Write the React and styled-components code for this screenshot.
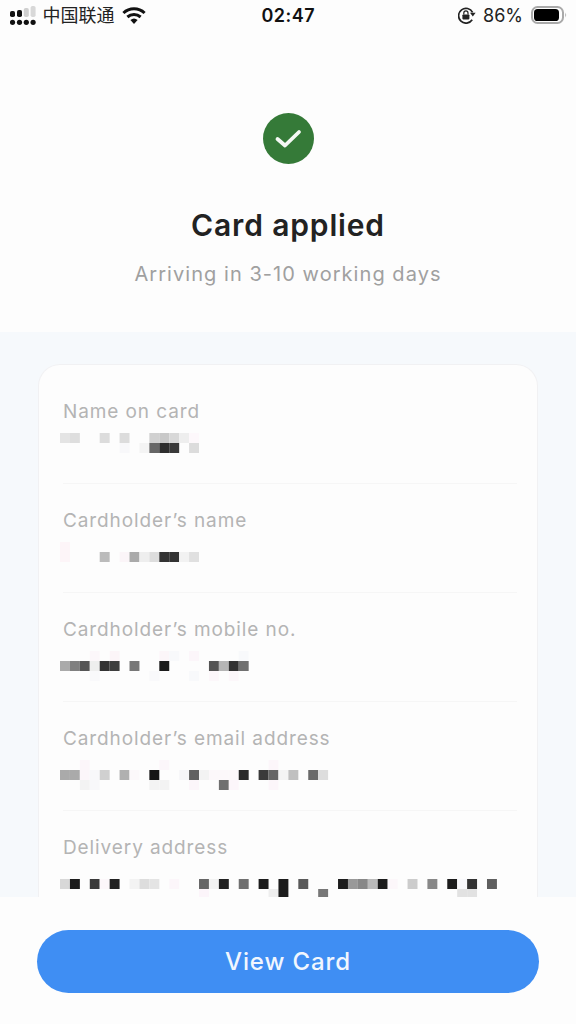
import React from 'react'
import styled, { createGlobalStyle } from 'styled-components'

const GlobalStyle = createGlobalStyle`
  html, body {
    margin: 0;
    padding: 0;
    background: #fdfdfd;
  }
  * { box-sizing: border-box; }
`

const Page = styled.div`
  width: 576px;
  height: 1024px;
  display: flex;
  flex-direction: column;
  overflow: hidden;
  background: #fdfdfd;
  font-family: Inter, "Noto Sans CJK SC", sans-serif;
`

const StatusBar = styled.div`
  height: 32px;
  flex: none;
  display: grid;
  grid-template-columns: 1fr auto 1fr;
  align-items: center;
  padding: 0 9px 2px 9.5px;
  color: #111;
`

const StatusLeft = styled.div`
  display: flex;
  align-items: center;
`

const StatusRight = styled.div`
  display: flex;
  align-items: center;
  justify-content: flex-end;
`

const Carrier = styled.span`
  margin: -2px 7px 0 7px;
  font-size: 18px;
  font-family: "Noto Sans CJK SC", sans-serif;
  color: #222;
`

const Time = styled.span`
  font-size: 18px;
  font-weight: 600;
  letter-spacing: 0.5px;
`

const Percent = styled.span`
  margin: 0 8px 0 7px;
  font-size: 18px;
  color: #222;
`

const Hero = styled.header`
  height: 300px;
  flex: none;
  display: flex;
  flex-direction: column;
  align-items: center;
  padding-top: 81px;
`

const Title = styled.h1`
  margin: 41px 0 0;
  font-size: 30px;
  line-height: 40px;
  font-weight: 600;
  letter-spacing: 0.85px;
  color: #222;
`

const Subtitle = styled.p`
  margin: 15px 0 0;
  font-size: 20px;
  line-height: 28px;
  letter-spacing: 1.05px;
  color: #a0a0a0;
`

const Body = styled.main`
  flex: 1;
  min-height: 0;
  overflow: hidden;
  padding: 32px 38px 0;
  background: #f6f9fc;
`

const Card = styled.section`
  padding: 10.4px 20px 0 24px;
  border: 1px solid #f1f1f3;
  border-bottom: 0;
  border-radius: 22px 22px 0 0;
  background: #fdfdfd;
`

const Field = styled.div`
  height: 109px;
  padding-top: 24.6px;
  border-bottom: 1px solid ${p => (p.$last ? 'transparent' : '#f6f6f6')};
`

const Label = styled.div`
  font-size: 19px;
  line-height: 24px;
  letter-spacing: 0.9px;
  color: #b4b4b4;
`

const Redacted = styled.svg`
  display: block;
  margin: 9.4px 0 0 -3px;
`

const Footer = styled.footer`
  height: 127px;
  flex: none;
  padding: 33px 37px 0;
  background: #fdfdfd;
`

const Button = styled.button`
  width: 502px;
  height: 63px;
  border: 0;
  border-radius: 32px;
  background: #3f8ef3;
  color: #f1f6fe;
  font-family: inherit;
  font-size: 24px;
  font-weight: 500;
  letter-spacing: 0.9px;
`

const SignalIcon = () => (
  <svg width="26" height="19" viewBox="0 0 26 19">
    <rect x="0" y="5" width="5" height="6" rx="1.8" fill="#111" />
    <rect x="7" y="4" width="5" height="7" rx="1.8" fill="#111" />
    <rect x="13.8" y="2" width="5" height="9" rx="1.8" fill="#cfcfcf" />
    <rect x="20.6" y="0" width="5" height="11" rx="1.8" fill="#d8d8d8" />
    {[2.5, 9.5, 16.3, 23.1].map(x => (
      <circle key={x} cx={x} cy="16.3" r="2.6" fill="#111" />
    ))}
  </svg>
)

const WifiIcon = () => (
  <svg width="24" height="17" viewBox="0 0 24 17">
    <path d="M1.4 6 A15.5 15.5 0 0 1 22.6 6" fill="none" stroke="#111" strokeWidth="3" />
    <path d="M5.4 10 A10 10 0 0 1 18.6 10" fill="none" stroke="#111" strokeWidth="3" />
    <path d="M8.4 13 A5.4 5.4 0 0 1 15.6 13 L12 17 Z" fill="#111" />
  </svg>
)

const RotationIcon = () => (
  <svg width="18" height="17" viewBox="0 0 18 17">
    <path d="M14.2 12.8 A7.4 7.4 0 1 1 14.6 5.4" fill="none" stroke="#222" strokeWidth="1.7" />
    <path d="M12 5.8 L17.6 5.8 L14.8 9.4 Z" fill="#222" />
    <rect x="4.4" y="7.4" width="7" height="5" rx="0.8" fill="#222" />
    <path d="M5.8 7.4 V6 A2.1 2.1 0 0 1 10 6 V7.4" fill="none" stroke="#222" strokeWidth="1.2" />
  </svg>
)

const BatteryIcon = () => (
  <svg width="36" height="18" viewBox="0 0 36 18">
    <rect x="1" y="1" width="31" height="16" rx="5.5" fill="none" stroke="#aaaaaa" strokeWidth="2" />
    <rect x="3" y="3" width="25" height="12" rx="3.6" fill="#000" />
    <path d="M34.4 6.4 Q36 9 34.4 11.6 Z" fill="#999999" />
  </svg>
)

const CheckBadge = () => (
  <svg width="51" height="51" viewBox="0 0 51 51">
    <circle cx="25.5" cy="25.5" r="25.5" fill="#357a38" />
    <path d="M14.5 26 L22 32.5 L36 19" fill="none" stroke="#f4f8f4" strokeWidth="3.8" strokeLinecap="round" strokeLinejoin="round" />
  </svg>
)

const CELL = 9.93

const Mosaic = ({ cells }) => (
  <Redacted width="440" height="30" viewBox="0 0 440 30">
    {cells.map(([n, r, c]) => (
      <rect key={`${n}-${r}`} x={n * CELL} y={r * 10} width={CELL} height="10" fill={c} />
    ))}
  </Redacted>
)

const fields = [
  {
    label: 'Name on card',
    cells: [
      [0, 0, '#e4e4e4'], [1, 0, '#dedede'], [4, 0, '#dcdcdc'], [6, 0, '#dcdcdc'],
      [9, 0, '#d0d0d0'], [10, 0, '#c8c8c8'], [11, 0, '#d8d8d8'], [12, 0, '#eeeeee'], [13, 0, '#fdf8fb'],
      [6, 1, '#f8f8fa'], [8, 1, '#f4f4f4'], [9, 1, '#666666'], [10, 1, '#2e2e2e'], [11, 1, '#3a3a3a'], [13, 1, '#dcdcdc'],
    ],
  },
  {
    label: 'Cardholder’s name',
    cells: [
      [0, 0, '#fdf5f8'], [0, 1, '#fdf5f8'], [4, 1, '#bbbbbb'], [6, 1, '#fbf5f8'], [7, 1, '#aaaaaa'],
      [8, 1, '#eeeeee'], [9, 1, '#dddddd'], [10, 1, '#333333'], [11, 1, '#333333'], [12, 1, '#f2f2f2'], [13, 1, '#e0e0e0'],
    ],
  },
  {
    label: 'Cardholder’s mobile no.',
    cells: [
      [3, 0, '#fcf7fa'], [5, 0, '#fcf5f8'], [10, 0, '#fcf6f9'], [11, 0, '#f8f9fb'], [13, 0, '#fcf6fa'], [18, 0, '#f8f9fb'],
      [0, 1, '#aaaaaa'], [1, 1, '#808080'], [2, 1, '#555555'], [3, 1, '#eeeeee'], [4, 1, '#333333'], [5, 1, '#3e3e3e'],
      [7, 1, '#777777'], [10, 1, '#1c1c1c'], [15, 1, '#555555'], [16, 1, '#b5b5b5'], [17, 1, '#333333'], [18, 1, '#707070'],
      [3, 2, '#f9f9fb'], [9, 2, '#f9f9fb'], [13, 2, '#f8f9fb'], [15, 2, '#fcf7fa'], [17, 2, '#fcf7fa'],
    ],
  },
  {
    label: 'Cardholder’s email address',
    cells: [
      [2, 0, '#fcf6fa'], [10, 0, '#fcf6fa'], [21, 0, '#fcf6fa'],
      [0, 1, '#aaaaaa'], [1, 1, '#aaaaaa'], [2, 1, '#fcf6fa'], [3, 1, '#f8f8fa'], [4, 1, '#d0d0d0'], [6, 1, '#b0b0b0'],
      [7, 1, '#fcf8fa'], [9, 1, '#151515'], [12, 1, '#f6f6f8'], [13, 1, '#606060'], [14, 1, '#f3f3f3'], [15, 1, '#fcf8fa'],
      [16, 1, '#fcf8fa'], [17, 1, '#fcf8fa'], [18, 1, '#2a2a2a'], [20, 1, '#3a3a3a'], [21, 1, '#666666'], [22, 1, '#f4f4f4'],
      [23, 1, '#c0c0c0'], [25, 1, '#6a6a6a'], [26, 1, '#dddddd'],
      [2, 2, '#f3f3f3'], [3, 2, '#f8f8fa'], [9, 2, '#f3f3f3'], [10, 2, '#f3f3f3'], [13, 2, '#fcf6fa'], [16, 2, '#707070'], [17, 2, '#fcf6fa'], [21, 2, '#fcf6fa'],
    ],
  },
  {
    label: 'Delivery address',
    last: true,
    cells: [
      [0, 1, '#d8d8d8'], [1, 1, '#1c1c1c'], [3, 1, '#3a3a3a'], [4, 1, '#fcf7fa'], [5, 1, '#222222'], [7, 1, '#f3f3f3'],
      [8, 1, '#dddddd'], [9, 1, '#e4e4e4'], [11, 1, '#fcf6fa'], [14, 1, '#666666'], [15, 1, '#f2f2f2'], [16, 1, '#222222'],
      [18, 1, '#707070'], [20, 1, '#1c1c1c'], [22, 1, '#1c1c1c'], [24, 1, '#5a5a5a'], [28, 1, '#1c1c1c'], [29, 1, '#999999'],
      [30, 1, '#888888'], [31, 1, '#bbbbbb'], [32, 1, '#1c1c1c'], [33, 1, '#fcf7fa'], [35, 1, '#cccccc'], [37, 1, '#888888'],
      [39, 1, '#1c1c1c'], [40, 1, '#f8f8fb'], [41, 1, '#333333'], [43, 1, '#5f5f5f'],
      [14, 2, '#fcf5fa'], [21, 2, '#eeeeee'], [22, 2, '#1c1c1c'], [26, 2, '#777777'], [40, 2, '#e2e2e2'], [41, 2, '#e2e2e2'],
    ],
  },
]

export default function App() {
  return (
    <Page>
      <GlobalStyle />
      <StatusBar>
        <StatusLeft>
          <SignalIcon />
          <Carrier>中国联通</Carrier>
          <WifiIcon />
        </StatusLeft>
        <Time>02:47</Time>
        <StatusRight>
          <RotationIcon />
          <Percent>86%</Percent>
          <BatteryIcon />
        </StatusRight>
      </StatusBar>
      <Hero>
        <CheckBadge />
        <Title>Card applied</Title>
        <Subtitle>Arriving in 3-10 working days</Subtitle>
      </Hero>
      <Body>
        <Card>
          {fields.map(f => (
            <Field key={f.label} $last={f.last}>
              <Label>{f.label}</Label>
              <Mosaic cells={f.cells} />
            </Field>
          ))}
        </Card>
      </Body>
      <Footer>
        <Button>View Card</Button>
      </Footer>
    </Page>
  )
}
